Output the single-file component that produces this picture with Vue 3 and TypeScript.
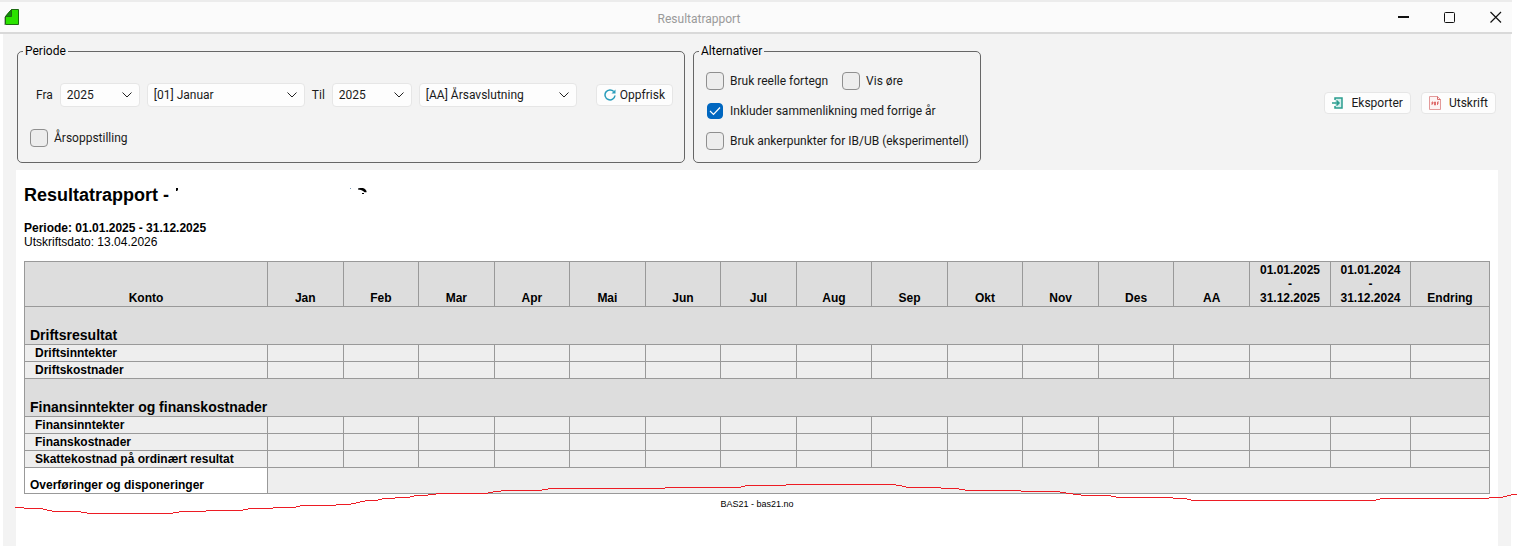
<script setup lang="ts">
import { computed, ref } from 'vue'

const years = ['2025', '2024', '2023']
const months = ['[01] Januar', '[02] Februar', '[03] Mars', '[AA] Årsavslutning']

const fromYear = ref('2025')
const fromMonth = ref('[01] Januar')
const toYear = ref('2025')
const toMonth = ref('[AA] Årsavslutning')
const yearly = ref(false)
const realSigns = ref(false)
const showCents = ref(false)
const compare = ref(true)
const anchors = ref(false)

const monthHeads = ['Jan', 'Feb', 'Mar', 'Apr', 'Mai', 'Jun', 'Jul', 'Aug', 'Sep', 'Okt', 'Nov', 'Des', 'AA']
const cellCount = monthHeads.length + 3

interface Row { kind: 'section' | 'item'; label: string }
const rows: Row[] = [
  { kind: 'section', label: 'Driftsresultat' },
  { kind: 'item', label: 'Driftsinntekter' },
  { kind: 'item', label: 'Driftskostnader' },
  { kind: 'section', label: 'Finansinntekter og finanskostnader' },
  { kind: 'item', label: 'Finansinntekter' },
  { kind: 'item', label: 'Finanskostnader' },
  { kind: 'item', label: 'Skattekostnad på ordinært resultat' },
]

// Hand-drawn cut line: [start x, y] of each horizontal step
const steps: [number, number][] = [
  [0, 23], [9, 24], [28, 25], [32, 26], [37, 27], [66, 28], [72, 29], [158, 28], [164, 27], [191, 26],
  [228, 25], [233, 24], [258, 23], [281, 22], [285, 21], [321, 20], [336, 19], [341, 18], [345, 17],
  [350, 16], [363, 15], [367, 14], [380, 13], [395, 12], [399, 11], [413, 10], [421, 9], [473, 8],
  [478, 7], [486, 6], [527, 5], [533, 4], [650, 3], [726, 2], [730, 1], [771, 0], [881, 1], [887, 2],
  [891, 3], [926, 4], [944, 5], [950, 6], [1006, 7], [1045, 8], [1051, 9], [1058, 10], [1066, 11],
  [1096, 12], [1101, 13], [1158, 14], [1172, 15], [1176, 16], [1361, 15], [1365, 14], [1474, 13],
  [1488, 12], [1492, 11], [1496, 10],
]
const cutPath = computed(() =>
  steps.map(([x, y], i) => `M${x} ${y + 0.5}H${i + 1 < steps.length ? steps[i + 1][0] : 1502}`).join(''),
)
</script>

<template>
  <div class="window">
    <header class="titlebar">
      <svg class="app-icon" width="16" height="16" viewBox="0 0 16 16" aria-hidden="true">
        <path d="M1.500 7.500 7.500.5h7v15h-13z" fill="#2be300" stroke="#1c6b10" />
        <path d="M1.500 7.500 7.500.5v7z" fill="#138a0c" stroke="#1c6b10" />
        <path d="M.5 8v8" stroke="#b5b5b5" />
      </svg>
      <span class="title">Resultatrapport</span>
      <div class="window-buttons">
        <button type="button" aria-label="Minimer">
          <svg width="12" height="12" viewBox="0 0 12 12"><path d="M0 5h11v2H0z" fill="#111" /></svg>
        </button>
        <button type="button" aria-label="Maksimer">
          <svg width="12" height="12" viewBox="0 0 12 12"><rect x=".5" y="1.500" width="10" height="10" rx="1" fill="none" stroke="#111" /></svg>
        </button>
        <button type="button" aria-label="Lukk">
          <svg width="12" height="12" viewBox="0 0 12 12"><path d="M.5 1l10.500 10.500M11 1 .5 11.500" fill="none" stroke="#111" stroke-width="1.200" /></svg>
        </button>
      </div>
    </header>

    <main class="body">
      <form class="toolbar" @submit.prevent>
        <fieldset class="period">
          <legend>Periode</legend>
          <div class="period-row">
            <label for="from-year">Fra</label>
            <span class="select year">
              <select id="from-year" v-model="fromYear"><option v-for="y in years" :key="y">{{ y }}</option></select>
              <svg width="10" height="6" viewBox="0 0 10 6"><path d="M.5.5 5 5 9.500.5" /></svg>
            </span>
            <span class="select month">
              <select v-model="fromMonth" aria-label="Fra måned"><option v-for="m in months" :key="m">{{ m }}</option></select>
              <svg width="10" height="6" viewBox="0 0 10 6"><path d="M.5.5 5 5 9.500.5" /></svg>
            </span>
            <label for="to-year">Til</label>
            <span class="select year">
              <select id="to-year" v-model="toYear"><option v-for="y in years" :key="y">{{ y }}</option></select>
              <svg width="10" height="6" viewBox="0 0 10 6"><path d="M.5.5 5 5 9.500.5" /></svg>
            </span>
            <span class="select month">
              <select v-model="toMonth" aria-label="Til måned"><option v-for="m in months" :key="m">{{ m }}</option></select>
              <svg width="10" height="6" viewBox="0 0 10 6"><path d="M.5.5 5 5 9.500.5" /></svg>
            </span>
            <button type="button" class="btn refresh">
              <svg width="12" height="12" viewBox="0 0 12 12" aria-hidden="true">
                <path d="M9.800 2.600A5 5 0 1 0 11 6.500" fill="none" stroke="#2a9dbb" stroke-width="1.500" />
                <path d="M11.500.5v4h-4z" fill="#2a9dbb" />
              </svg>
              <span>Oppfrisk</span>
            </button>
          </div>
          <label class="check">
            <span class="box"><input v-model="yearly" type="checkbox" /></span>
            <span>Årsoppstilling</span>
          </label>
        </fieldset>

        <fieldset class="options">
          <legend>Alternativer</legend>
          <div class="options-row">
            <label class="check">
              <span class="box"><input v-model="realSigns" type="checkbox" /></span>
              <span>Bruk reelle fortegn</span>
            </label>
            <label class="check">
              <span class="box"><input v-model="showCents" type="checkbox" /></span>
              <span>Vis øre</span>
            </label>
          </div>
          <label class="check">
            <span class="box">
              <input v-model="compare" type="checkbox" />
              <svg v-if="compare" width="12" height="10" viewBox="0 0 12 10"><path d="M1 5l3.500 3.500L11 1.500" fill="none" stroke="#fff" stroke-width="1.200" /></svg>
            </span>
            <span>Inkluder sammenlikning med forrige år</span>
          </label>
          <label class="check">
            <span class="box"><input v-model="anchors" type="checkbox" /></span>
            <span>Bruk ankerpunkter for IB/UB (eksperimentell)</span>
          </label>
        </fieldset>

        <div class="actions">
          <button type="button" class="btn">
            <svg width="12" height="12" viewBox="0 0 12 12" aria-hidden="true">
              <path d="M3 3V1h7v10H3V9" fill="#d5efec" stroke="#2a9d8f" stroke-width="1.500" />
              <path d="M0 6h7M4.500 3.500 7 6 4.500 8.500" fill="none" stroke="#2a9d8f" stroke-width="1.500" />
            </svg>
            <span>Eksporter</span>
          </button>
          <button type="button" class="btn">
            <svg width="12" height="14" viewBox="0 0 12 14" aria-hidden="true">
              <path d="M.5.5h8l3 3v10H.5z" fill="#fdf3f3" stroke="#e39a9a" />
              <path d="M8.500.5v3h3" fill="none" stroke="#d96b6b" />
              <path d="M3 9V6h1v1.500H3M5.500 6v3h1V6zM8.500 9V6h1.500M8.500 7.500h1" fill="none" stroke="#d84f4f" stroke-width=".8" />
            </svg>
            <span>Utskrift</span>
          </button>
        </div>
      </form>

      <article class="sheet">
        <h1>
          <span>Resultatrapport -</span>
          <svg width="196" height="14" viewBox="0 0 196 14" aria-hidden="true">
            <path d="M1 0h2v2l-1 1H1z" />
            <path d="M175 0h1v1h-1z" fill="#7a9ab8" />
            <path d="M183 1.500V.5l2-.5h3l2 1 1.500 2v1.200h-2L188 3l-2-1zM187 5h2v1h-2z" />
          </svg>
        </h1>
        <p class="meta"><strong>Periode: 01.01.2025 - 31.12.2025</strong><br />Utskriftsdato: 13.04.2026</p>

        <table>
          <colgroup>
            <col class="col-account" />
            <col v-for="m in monthHeads" :key="m" />
            <col class="col-current" /><col class="col-previous" /><col class="col-change" />
          </colgroup>
          <thead>
            <tr>
              <th scope="col">Konto</th>
              <th v-for="m in monthHeads" :key="m" scope="col">{{ m }}</th>
              <th scope="col">01.01.2025<br />-<br />31.12.2025</th>
              <th scope="col">01.01.2024<br />-<br />31.12.2024</th>
              <th scope="col">Endring</th>
            </tr>
          </thead>
          <tbody>
            <tr v-for="row in rows" :key="row.label" :class="row.kind">
              <th v-if="row.kind === 'section'" :colspan="cellCount + 1" scope="colgroup">{{ row.label }}</th>
              <template v-else>
                <th scope="row">{{ row.label }}</th>
                <td v-for="n in cellCount" :key="n"></td>
              </template>
            </tr>
            <tr class="transfers">
              <th scope="row">Overføringer og disponeringer</th>
              <td :colspan="cellCount"></td>
            </tr>
          </tbody>
        </table>
        <footer>BAS21 - bas21.no</footer>
        <svg class="cut" viewBox="0 0 1502 30" preserveAspectRatio="none" aria-hidden="true">
          <path :d="cutPath" fill="none" stroke="#ed1c24" shape-rendering="crispEdges" />
        </svg>
      </article>
    </main>
  </div>
</template>

<style>
body {
  background: #fff;
}
</style>

<style scoped>
.window {
  box-sizing: border-box;
  min-height: 100vh;
  display: flex;
  flex-direction: column;
  font: 12px/16px "Segoe UI", Roboto, "Open Sans", sans-serif;
  color: #1a1a1a;
}
.titlebar {
  display: flex;
  align-items: center;
  height: 30px;
  margin-right: 5px;
  padding: 0 10px 0 4px;
  border-top: 2px solid #ececec;
  border-bottom: 2px solid #d9d9d9;
  background: #fbfbfb;
}
.title {
  flex: 1;
  padding-top: 4px;
  text-align: center;
  color: #9a9a9a;
}
.window-buttons {
  display: flex;
  gap: 34px;
  padding-left: 20px;
}
.window-buttons button {
  display: flex;
  padding: 0;
  border: 0;
  background: none;
}
.body {
  flex: 1;
  display: flex;
  flex-direction: column;
  margin: 0 6px 0 3px;
  padding: 9px 13px 0;
  background: #f3f3f3;
}
.toolbar {
  display: flex;
  align-items: stretch;
  gap: 8px;
  padding-left: 1px;
}
fieldset {
  box-sizing: border-box;
  min-width: 0;
  height: 120px;
  margin: 0;
  padding: 0 11px 0 12px;
  border: 1px solid #666;
  border-radius: 5px;
}
legend {
  margin-left: -7px;
  padding: 0 2px;
  color: #000;
}
.period {
  width: 668px;
}
.period-row {
  display: flex;
  align-items: center;
  gap: 7px;
  padding: 24px 0 22px 6px;
}
.select {
  display: grid;
  align-items: center;
}
.select.year {
  width: 80px;
}
.select.month {
  width: 158px;
}
.select select,
.select svg {
  grid-area: 1 / 1;
}
.select select {
  appearance: none;
  width: 100%;
  height: 24px;
  padding: 0 6px;
  border: 1px solid #e6e6e6;
  border-radius: 4px;
  background: #fdfdfd;
  font: inherit;
  color: inherit;
}
.select svg {
  justify-self: end;
  margin-right: 8px;
  fill: none;
  stroke: #222;
  pointer-events: none;
}
.btn {
  display: flex;
  align-items: center;
  gap: 8px;
  height: 22px;
  padding: 0 7px;
  border: 1px solid #e6e6e6;
  border-radius: 4px;
  background: #fdfdfd;
  font: inherit;
  color: inherit;
  white-space: nowrap;
}
.refresh {
  gap: 4px;
  margin-left: auto;
}
.check {
  display: flex;
  align-items: center;
  gap: 6px;
  white-space: nowrap;
}
.box {
  display: grid;
  place-items: center;
}
.box input,
.box svg {
  grid-area: 1 / 1;
}
.box input {
  appearance: none;
  box-sizing: border-box;
  width: 18px;
  height: 18px;
  margin: 0;
  border: 1px solid #8f8f8f;
  border-radius: 4px;
  background: #ededed;
}
.box input:checked {
  width: 16px;
  height: 16px;
  margin: 1px;
  border-color: #0067c0;
  background: #0067c0;
}
.box svg {
  pointer-events: none;
}
.options {
  width: 288px;
}
.options-row {
  display: flex;
  gap: 14px;
  padding-top: 13px;
}
.options > .check {
  margin-top: 12px;
}
.actions {
  display: flex;
  align-items: center;
  gap: 10px;
  margin-left: auto;
  padding-right: 2px;
}
.sheet {
  position: relative;
  flex: 1;
  margin-top: 7px;
  padding: 15px 8px 8px;
  background: #fff;
  font: 12px/14px "Liberation Sans", Arial, sans-serif;
  color: #000;
}
h1 {
  display: flex;
  align-items: center;
  gap: 6px;
  margin: 0;
  font-size: 18px;
  line-height: 20px;
}
.meta {
  margin: 16px 0 12px;
}
table {
  width: 100%;
  table-layout: fixed;
  border-collapse: collapse;
}
.col-account {
  width: 243px;
}
.col-current {
  width: 81px;
}
.col-previous {
  width: 80px;
}
.col-change {
  width: 79px;
}
th,
td {
  height: 14px;
  padding: 1px 5px;
  border: 1px solid #999;
  background: #eee;
}
thead th {
  padding: 1px 0;
  background: #ddd;
  vertical-align: bottom;
}
tbody th {
  text-align: left;
  white-space: nowrap;
}
.item th {
  padding-left: 10px;
}
.section th {
  padding-top: 20px;
  background: #ddd;
  font-size: 14px;
  line-height: 16px;
}
.transfers th {
  padding-top: 10px;
  background: #fff;
}
footer {
  margin-top: 4px;
  font-size: 9px;
  line-height: 12px;
  text-align: center;
}
.cut {
  position: absolute;
  top: 314px;
  left: -1px;
  width: calc(100% + 20px);
  height: 30px;
  pointer-events: none;
}
</style>
